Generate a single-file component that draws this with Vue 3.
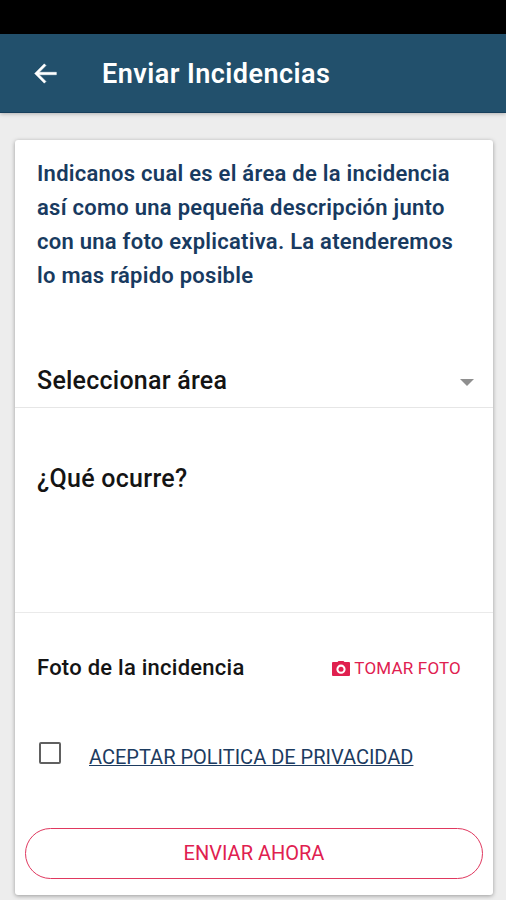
<script setup>
import { ref } from 'vue'
const accepted = ref(false)
const intro = [
  'Indicanos cual es el área de la incidencia',
  'así como una pequeña descripción junto',
  'con una foto explicativa. La atenderemos',
  'lo mas rápido posible',
]
</script>

<template>
  <div class="screen">
    <div class="status"></div>
    <header class="bar">
      <svg class="back" viewBox="0 0 24 24"><path d="M21 11H6.83l5.58-5.59L11 4l-8 8 8 8 1.41-1.41L6.83 13H21z" /></svg>
      <h1>Enviar Incidencias</h1>
    </header>
    <main class="card">
      <p class="intro"><span v-for="line in intro" :key="line">{{ line }}</span></p>
      <div class="select"><span>Seleccionar área</span><i class="caret"></i></div>
      <div class="question">¿Qué ocurre?</div>
      <div class="photo">
        <span>Foto de la incidencia</span>
        <button class="take">
          <svg viewBox="0 0 18 15"><path fill-rule="evenodd" d="M1 1h4.500L6.500 0h5l1 1H17a1 1 0 0 1 1 1v12a1 1 0 0 1-1 1H1a1 1 0 0 1-1-1V2a1 1 0 0 1 1-1zM9 3.600a4.600 4.600 0 1 0 0 9.200a4.600 4.600 0 1 0 0-9.200z" /><circle cx="9" cy="8.200" r="2.500" /></svg>
          <span>TOMAR FOTO</span>
        </button>
      </div>
      <div class="privacy">
        <button class="box" role="checkbox" :aria-checked="accepted" @click="accepted = !accepted"></button>
        <a>ACEPTAR POLITICA DE PRIVACIDAD</a>
      </div>
      <button class="send">ENVIAR AHORA</button>
    </main>
  </div>
</template>

<style>
body { background: #ededed; }
</style>

<style scoped>
* { box-sizing: border-box; }
.screen { width: 506px; height: 900px; overflow: hidden; background: #ededed; font-family: Roboto, sans-serif; }
.status { height: 34px; background: #000; }
.bar { height: 79px; display: flex; align-items: center; padding-left: 31px; background: #22506c; border-bottom: 1px solid #173f5c; color: #fff; box-shadow: 0 1px 4px rgba(0,0,0,.25); }
.back { width: 29px; height: 29px; fill: #fff; stroke: #fff; stroke-width: .4; margin-right: 42px; }
h1 { margin: 0; padding-top: 2px; font-size: 27px; line-height: 34px; font-weight: 600; letter-spacing: .46px; white-space: nowrap; }
.card { display: flex; flex-direction: column; width: 478px; height: 755px; margin: 27px 0 0 15px; background: #fff; border-radius: 3px; box-shadow: 0 1px 4px rgba(0,0,0,.35); }
.intro { margin: 0; padding: 17px 22px 0; height: 211px; color: #183a60; font-size: 22px; font-weight: 600; letter-spacing: .26px; line-height: 34px; white-space: nowrap; }
.intro span { display: block; }
.select { height: 57px; display: flex; justify-content: space-between; align-items: center; padding: 2px 19px 0 22px; border-bottom: 1px solid #e6e6e6; color: #141414; font-size: 25px; font-weight: 500; letter-spacing: .24px; }
.caret { border: 7px solid transparent; border-top-color: #8f8f8f; border-bottom: 0; margin-top: 4px; }
.question { height: 205px; padding: 56px 22px 0; border-bottom: 1px solid #eaeaea; color: #141414; font-size: 25px; line-height: 30px; font-weight: 500; letter-spacing: .28px; }
.photo { display: flex; align-items: center; justify-content: space-between; height: 110px; padding: 0 32px 0 22px; color: #141414; font-size: 22px; font-weight: 500; letter-spacing: .25px; }
.photo > span { padding-bottom: 1px; }
button { font-family: inherit; background: none; border: 0; padding: 0; }
.take { display: flex; align-items: center; gap: 4px; color: #e0204f; font-size: 17px; font-weight: 400; letter-spacing: .18px; white-space: nowrap; }
.take svg { width: 18px; height: 15px; fill: currentColor; }
.privacy { display: flex; align-items: center; height: 60px; padding-left: 24px; gap: 28px; color: #1c3b60; font-size: 20px; white-space: nowrap; }
.privacy a { text-decoration: underline; text-decoration-thickness: 1px; padding-top: 7px; }
.box { width: 22px; height: 22px; border: 2px solid #606060; border-radius: 2px; }
.send { width: 458px; height: 51px; margin: 45px 0 0 10px; border: 1px solid #e0385f; border-radius: 26px; color: #e0204f; font-size: 20px; padding-bottom: 1px; }
</style>
